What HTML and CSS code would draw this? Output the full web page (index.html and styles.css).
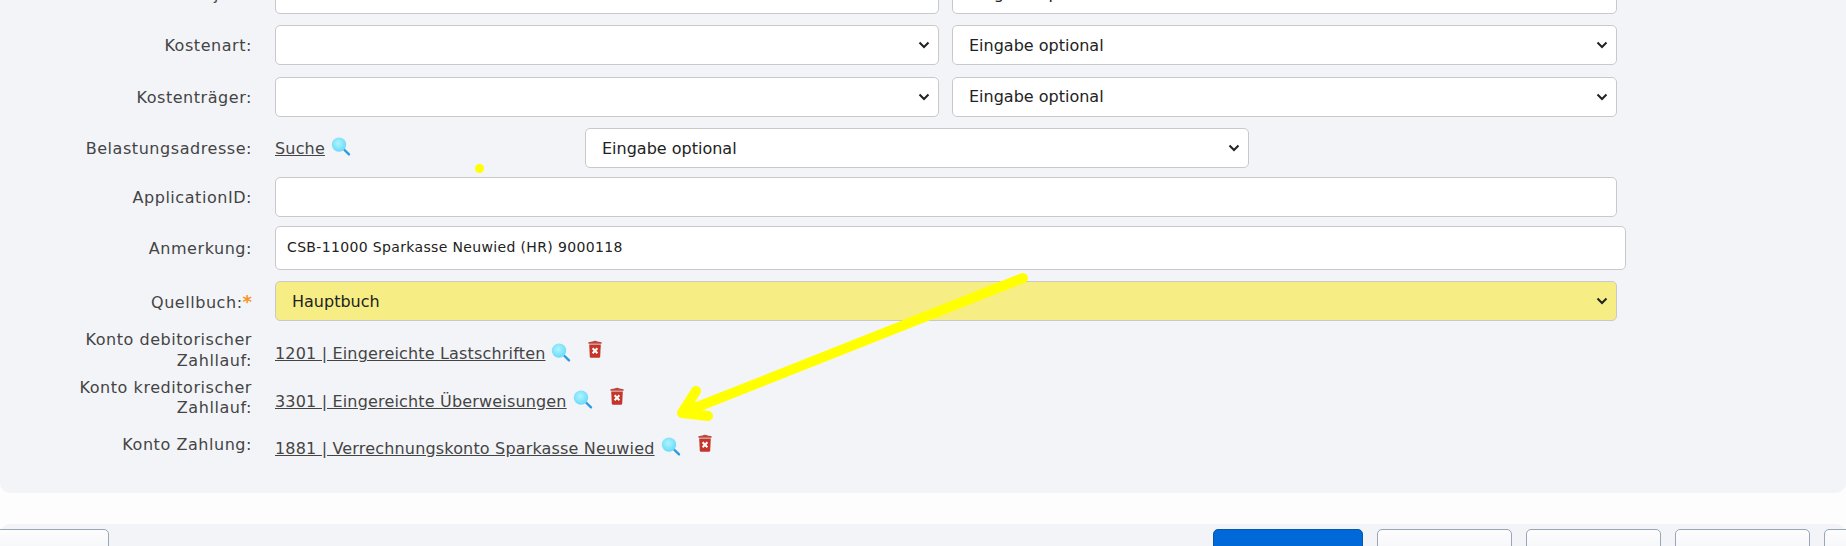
FILE: index.html
```html
<!DOCTYPE html>
<html lang="de">
<head>
    <meta charset="UTF-8">
    <title>Zahllauf</title>
    <link rel="stylesheet" href="styles.css">
</head>
<body>

<!-- Icons used by the rows below -->
<svg class="defs" width="0" height="0">
    <defs>
        <radialGradient id="lens" cx="0.45" cy="0.4" r="0.7">
            <stop offset="0" stop-color="#aef4ff"/>
            <stop offset="1" stop-color="#5fd6f7"/>
        </radialGradient>
        <symbol id="icon-search" viewBox="0 0 20 19">
            <path d="M12.5 12 L18 17.3" stroke="#2a9be2" stroke-width="2.4" stroke-linecap="round"/>
            <circle cx="8" cy="7.6" r="7.2" fill="url(#lens)"/>
        </symbol>
        <symbol id="icon-trash" viewBox="0 0 14 18">
            <path d="M4.5 1.5 Q7 -0.2 9.5 1.5 L13.6 2.3 V3.8 H0.4 V2.3 Z" fill="#b8483c"/>
            <path d="M1.2 4.6 H12.8 L12.2 16.6 Q12.1 17.8 11 17.8 H3 Q1.9 17.8 1.8 16.6 Z" fill="#c5352a"/>
            <path d="M4.6 8.2 L9.4 13.2 M9.4 8.2 L4.6 13.2" stroke="#fff" stroke-width="2"/>
        </symbol>
    </defs>
</svg>

<main class="panel">
    <div class="row row-first">
        <label class="row-label">Projekt:</label>
        <input class="field field-half" type="text">
        <select class="field field-half"><option>Eingabe optional</option></select>
    </div>
    <div class="row">
        <label class="row-label">Kostenart:</label>
        <select class="field field-half"><option></option></select>
        <select class="field field-half"><option>Eingabe optional</option></select>
    </div>
    <div class="row">
        <label class="row-label">Kostenträger:</label>
        <select class="field field-half"><option></option></select>
        <select class="field field-half"><option>Eingabe optional</option></select>
    </div>
    <div class="row row-tight">
        <label class="row-label">Belastungsadresse:</label>
        <div class="search-cell">
            <a class="link" href="#">Suche</a>
            <svg class="icon-search"><use href="#icon-search"/></svg>
        </div>
        <select class="field field-narrow"><option>Eingabe optional</option></select>
    </div>
    <div class="row row-tight">
        <label class="row-label">ApplicationID:</label>
        <input class="field field-full" type="text">
    </div>
    <div class="row">
        <label class="row-label">Anmerkung:</label>
        <input class="field field-note" type="text" value="CSB-11000 Sparkasse Neuwied (HR) 9000118">
    </div>
    <div class="row row-tight">
        <label class="row-label">Quellbuch:<span class="required">*</span></label>
        <select class="field field-full field-required"><option>Hauptbuch</option></select>
    </div>

    <div class="row row-account">
        <label class="row-label">Konto debitorischer Zahllauf:</label>
        <div class="account">
            <a class="link" href="#">1201 | Eingereichte Lastschriften</a>
            <svg class="icon-search"><use href="#icon-search"/></svg>
            <svg class="icon-trash"><use href="#icon-trash"/></svg>
        </div>
    </div>
    <div class="row row-account">
        <label class="row-label">Konto kreditorischer Zahllauf:</label>
        <div class="account">
            <a class="link" href="#">3301 | Eingereichte Überweisungen</a>
            <svg class="icon-search"><use href="#icon-search"/></svg>
            <svg class="icon-trash"><use href="#icon-trash"/></svg>
        </div>
    </div>
    <div class="row row-account row-last">
        <label class="row-label">Konto Zahlung:</label>
        <div class="account">
            <a class="link" href="#">1881 | Verrechnungskonto Sparkasse Neuwied</a>
            <svg class="icon-search"><use href="#icon-search"/></svg>
            <svg class="icon-trash"><use href="#icon-trash"/></svg>
        </div>
    </div>
</main>

<footer class="actions">
    <button class="btn btn-back" type="button"></button>
    <div class="actions-right">
        <button class="btn btn-primary" type="button"></button>
        <button class="btn" type="button"></button>
        <button class="btn" type="button"></button>
        <button class="btn" type="button"></button>
        <button class="btn" type="button"></button>
    </div>
</footer>

<!-- Yellow marks drawn on top of the screenshot -->
<svg class="markup" width="1846" height="546">
    <circle cx="479.5" cy="168.5" r="4.5" fill="#ffff00"/>
    <path d="M1023 278 L682 413 M696 391 L682 413 L708 416" fill="none" stroke="#ffff00" stroke-width="10" stroke-linecap="round" stroke-linejoin="round"/>
</svg>

</body>
</html>
```

FILE: styles.css
```css
/* Page */
html, body {
    height: 546px;
    overflow: hidden;
}

body {
    position: relative;
    margin: 0;
    background-color: #fdfdfe;
    font-family: "DejaVu Sans", Verdana, sans-serif;
    font-size: 16px;
    color: #444;
}

.defs {
    position: absolute;
}

/* Form panel, scrolled so that the first row is cut off */
.panel {
    height: 493px;
    box-sizing: border-box;
    padding-top: 25px;
    background-color: #f3f4f8;
    border-radius: 0 0 10px 10px;
}

.row {
    display: flex;
    align-items: center;
    margin-bottom: 11.5px;
}

.row-first {
    margin-top: -51.5px;
}

.row-tight {
    margin-bottom: 9px;
}

.row-label {
    flex: none;
    box-sizing: border-box;
    width: 252px;
    margin-right: 23px;
    padding: 3px 0 0 50px;
    text-align: right;
    line-height: 20.5px;
    letter-spacing: 0.55px;
}

.required {
    color: #f7941d;
    font-size: 18px;
    font-weight: bold;
    letter-spacing: 0;
}

.field {
    box-sizing: border-box;
    height: 40px;
    padding: 0 16px;
    background-color: #fff;
    border: 1px solid #c9c9cc;
    border-radius: 5px;
    font-family: inherit;
    font-size: 16px;
    color: #222;
}

select.field {
    appearance: none;
    background-image: url("data:image/svg+xml,%3Csvg xmlns='http://www.w3.org/2000/svg' width='12' height='8'%3E%3Cpath d='M1.5 1.5 L6 6 L10.5 1.5' fill='none' stroke='%23222' stroke-width='2'/%3E%3C/svg%3E");
    background-repeat: no-repeat;
    background-position: right 8px center;
}

.field-half {
    width: 664px;
    margin-right: 13px;
}

.field-half:last-child {
    width: 665px;
    margin-right: 0;
}

.field-narrow {
    width: 664px;
}

.field-full {
    width: 1342px;
}

.field-note {
    width: 1350.5px;
    height: 43.5px;
    padding: 0 11px 2px;
    font-size: 14px;
    letter-spacing: 0.35px;
}

.field-required {
    background-color: #f6ee84;
}

.search-cell {
    flex: none;
    display: flex;
    align-items: center;
    width: 310px;
}

.link {
    color: #444;
    text-decoration: underline;
    letter-spacing: 0.17px;
}

.icon-search {
    flex: none;
    width: 20px;
    height: 19px;
    margin-left: 6px;
    margin-top: -3px;
}

.icon-trash {
    flex: none;
    width: 14px;
    height: 18px;
    margin-left: 17px;
    margin-top: -10px;
}

/* Account rows */
.row-account {
    margin-bottom: 6.5px;
}

.row-account .row-label {
    padding-top: 0;
}

.row-last {
    min-height: 40px;
}

.account {
    display: flex;
    align-items: center;
    padding-top: 6px;
}

/* Bottom button bar */
.actions {
    display: flex;
    justify-content: space-between;
    height: 60px;
    box-sizing: border-box;
    margin-top: 31px;
    padding-top: 5px;
    background-color: #f3f4f8;
    border-radius: 10px 10px 0 0;
}

.actions-right {
    display: flex;
    gap: 14px;
    margin-right: -113px;
}

.btn {
    width: 135px;
    height: 40px;
    background: linear-gradient(#fdfdfe, #f0f1f5);
    border: 1px solid #9aa5b8;
    border-radius: 5px;
}

.btn-back {
    margin-left: -26px;
}

.btn-primary {
    width: 150px;
    background: #0069d9;
    border-color: #0a58ad;
}

/* Overlay with the yellow marks */
.markup {
    position: absolute;
    top: 0;
    left: 0;
    pointer-events: none;
}
```
